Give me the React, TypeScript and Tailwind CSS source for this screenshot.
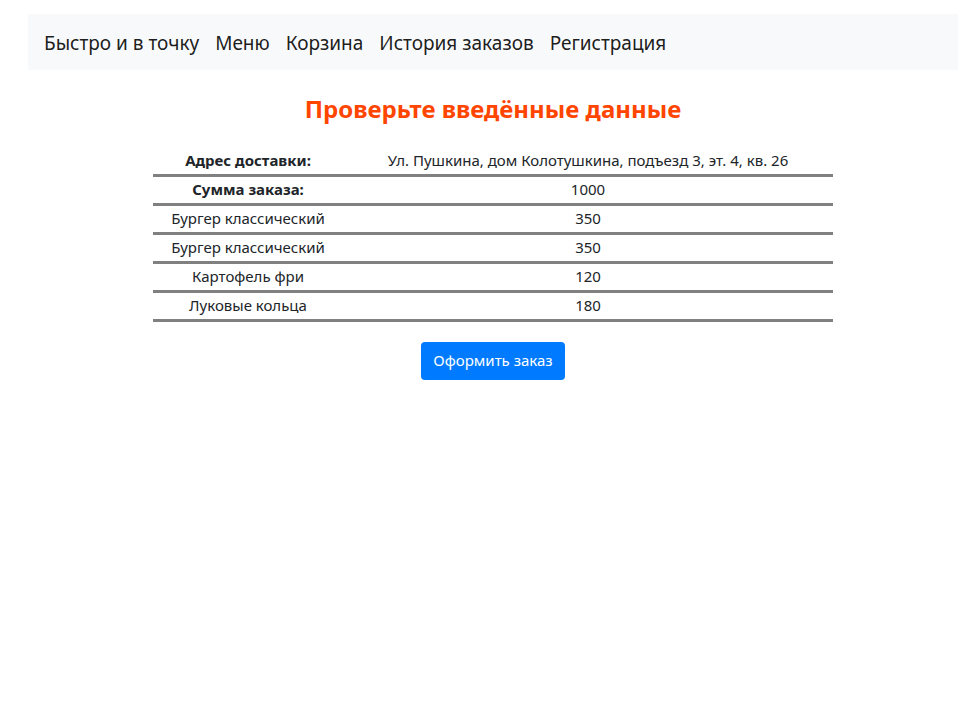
const items = [
  { name: "Бургер классический", price: 350 },
  { name: "Бургер классический", price: 350 },
  { name: "Картофель фри", price: 120 },
  { name: "Луковые кольца", price: 180 },
];

export default function App() {
  return (
    <div className="min-h-screen bg-white pl-[28px] pr-[15px] pt-[14px] font-['Noto_Sans',sans-serif] text-[#212529]">
      <nav className="flex h-[56px] items-center gap-[16px] bg-[#f8f9fa] px-[16px] pt-[2px] text-[19px] text-black/90">
        <a>Быстро и в точку</a>
        <a>Меню</a>
        <a>Корзина</a>
        <a>История заказов</a>
        <a>Регистрация</a>
      </nav>

      <div className="flex flex-col items-center">
        <h1 className="mt-[23px] text-[24px] font-bold leading-[32px] text-[#ff4500]">
          Проверьте введённые данные
        </h1>

        <table className="mt-[21px] w-[680px] text-center text-[15px]">
          <tbody>
            <tr className="border-b-[3px] border-[#808080]">
              <th className="h-[29px] w-[190px] font-bold">Адрес доставки:</th>
              <td>Ул. Пушкина, дом Колотушкина, подъезд 3, эт. 4, кв. 26</td>
            </tr>
            <tr className="border-b-[3px] border-[#808080]">
              <th className="h-[29px] font-bold">Сумма заказа:</th>
              <td>1000</td>
            </tr>
            {items.map((it, i) => (
              <tr key={i} className="border-b-[3px] border-[#808080]">
                <td className="h-[29px]">{it.name}</td>
                <td>{it.price}</td>
              </tr>
            ))}
          </tbody>
        </table>

        <button className="mt-[20px] h-[38px] rounded-[4px] bg-[#007bff] px-[12px] text-[15px] text-white">
          Оформить заказ
        </button>
      </div>
    </div>
  );
}
